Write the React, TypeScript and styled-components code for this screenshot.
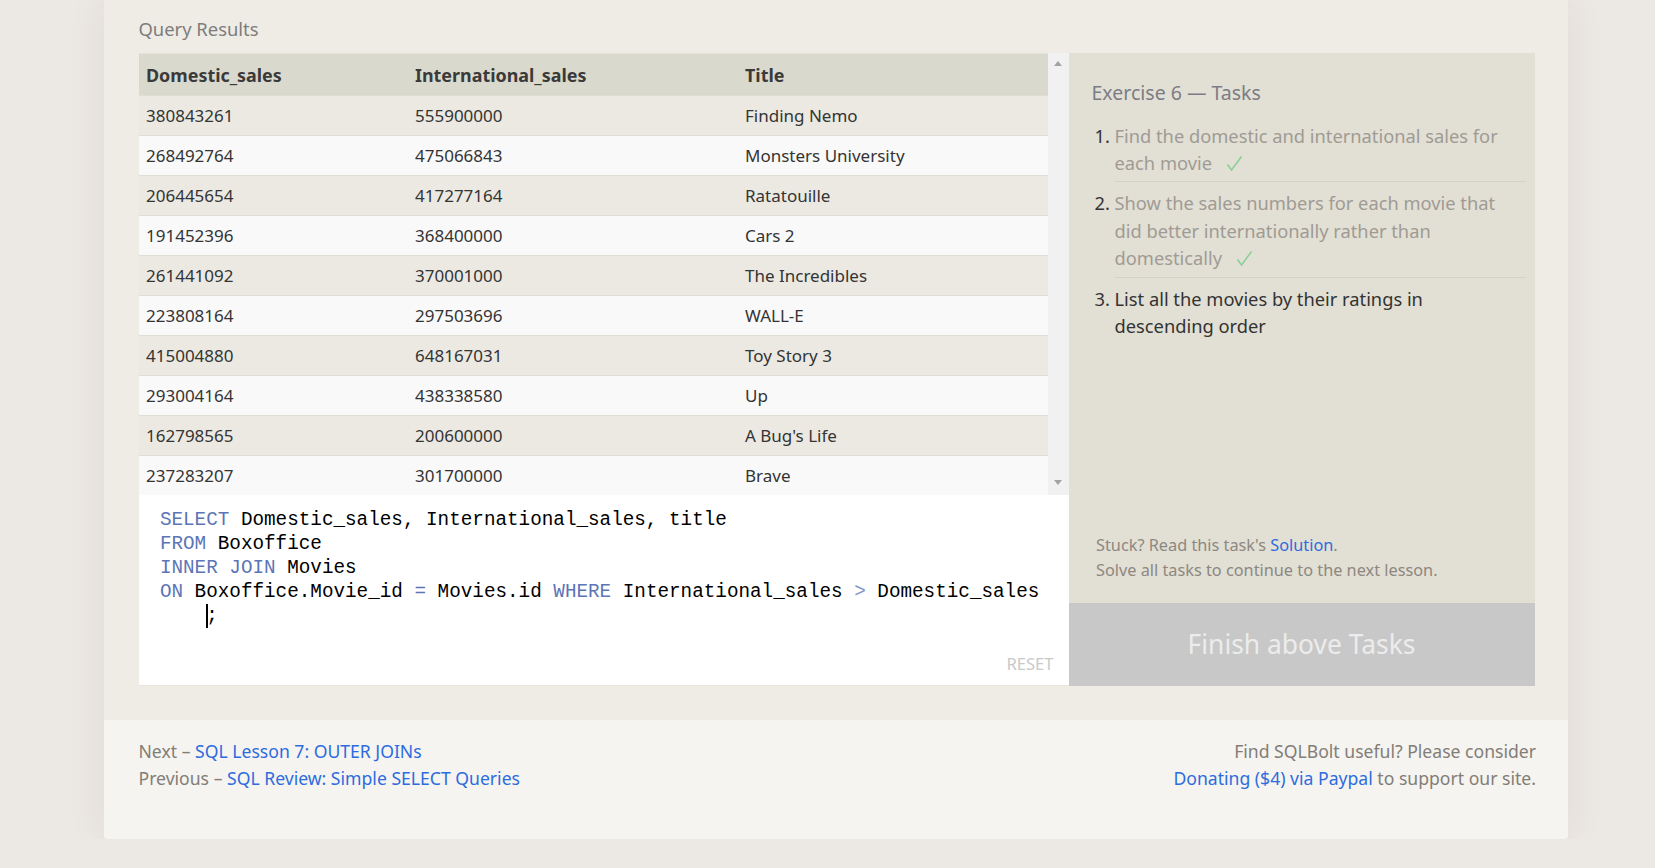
import React from 'react';
import styled, { createGlobalStyle } from 'styled-components';

const GlobalStyle = createGlobalStyle`
    html, body {
        margin: 0;
        padding: 0;
        background: #ece8e4;
        font-family: "Noto Sans", "Open Sans", sans-serif;
    }
`;

interface Row {
    domestic: string
    international: string
    title: string
}

const rows: Row[] = [
    { domestic: '380843261', international: '555900000', title: 'Finding Nemo' },
    { domestic: '268492764', international: '475066843', title: 'Monsters University' },
    { domestic: '206445654', international: '417277164', title: 'Ratatouille' },
    { domestic: '191452396', international: '368400000', title: 'Cars 2' },
    { domestic: '261441092', international: '370001000', title: 'The Incredibles' },
    { domestic: '223808164', international: '297503696', title: 'WALL-E' },
    { domestic: '415004880', international: '648167031', title: 'Toy Story 3' },
    { domestic: '293004164', international: '438338580', title: 'Up' },
    { domestic: '162798565', international: '200600000', title: "A Bug's Life" },
    { domestic: '237283207', international: '301700000', title: 'Brave' },
];

interface Task {
    text: string
    done: boolean
}

const tasks: Task[] = [
    { text: 'Find the domestic and international sales for each movie', done: true },
    { text: 'Show the sales numbers for each movie that did better internationally rather than domestically', done: true },
    { text: 'List all the movies by their ratings in descending order', done: false },
];

const Card = styled.div`
    width: 1464px;
    margin-left: 104px;
    background: #efece5;
    border-radius: 0 0 4px 4px;
    box-shadow: 0 0 40px rgba(60, 40, 20, 0.07);
`;

const Lesson = styled.section`
    padding: 14.5px 33px 34px 34.5px;
`;

const SectionTitle = styled.div`
    font-size: 18.4px;
    line-height: 27px;
    color: #7d7d7d;
    margin-bottom: 11.5px;
`;

const Exercise = styled.div`
    display: flex;
    height: 633px;
`;

const LeftColumn = styled.div`
    width: 930px;
    display: flex;
    flex-direction: column;
`;

const ResultsArea = styled.div`
    display: flex;
    height: 442px;
    background: #e8e6de;
`;

const Table = styled.div`
    flex: 1;
    display: flex;
    flex-direction: column;
`;

const TableRow = styled.div<{ $header?: boolean; $odd?: boolean }>`
    display: grid;
    grid-template-columns: 269px 330px 1fr;
    align-items: center;
    box-sizing: border-box;
    height: ${p => (p.$header ? '42px' : '40px')};
    background: ${p => (p.$header ? '#dad9cd' : p.$odd ? '#ebe9e1' : '#f9f9f9')};
    border-top: ${p => (p.$header ? '1px solid #e4e2da' : '1px solid #dfddd5')};
    color: ${p => (p.$header ? '#3a3a3a' : '#343434')};
    font-size: ${p => (p.$header ? '17.9px' : '17px')};
    font-weight: ${p => (p.$header ? 700 : 400)};
`;

const Cell = styled.div`
    padding-left: 7.5px;
    white-space: nowrap;
`;

const ScrollTrack = styled.div`
    width: 21px;
    background: #f1f1f1;
    display: flex;
    flex-direction: column;
    justify-content: space-between;
    align-items: center;
    padding: 8px 0 10px;
    box-sizing: border-box;
`;

const Arrow = styled.div<{ $down?: boolean }>`
    width: 0;
    height: 0;
    border-left: 4.5px solid transparent;
    border-right: 4.5px solid transparent;
    ${p => (p.$down ? 'border-top: 5px solid #a3a3a3;' : 'border-bottom: 5px solid #a3a3a3;')}
`;

const Editor = styled.div`
    flex: 1;
    background: #ffffff;
    display: flex;
    flex-direction: column;
    padding: 13px 15px 10px 21.4px;
    border-bottom: 1px solid #e6e4dc;
`;

const Code = styled.div`
    font-family: "Liberation Mono", "DejaVu Sans Mono", monospace;
    font-size: 19.3px;
    line-height: 24px;
    color: #000;
    white-space: pre;
`;

const Keyword = styled.span<{ $light?: boolean }>`
    color: ${p => (p.$light ? '#7f97cc' : '#5b75b6')};
`;

const Caret = styled.span`
    display: inline-block;
    width: 0;
    height: 24px;
    border-left: 2px solid #000;
    vertical-align: top;
    margin-right: -2px;
`;

const Reset = styled.div`
    margin-top: auto;
    align-self: flex-end;
    font-size: 16.6px;
    color: #c9c9c9;
`;

const TaskPanel = styled.aside`
    width: 466px;
    background: #e2dfd4;
    display: flex;
    flex-direction: column;
`;

const TaskBody = styled.div`
    flex: 1;
    display: flex;
    flex-direction: column;
    padding: 25.5px 9px 0 23px;
`;

const TaskHeading = styled.div`
    font-size: 19.5px;
    line-height: 27px;
    color: #7b7d86;
`;

const TaskList = styled.ol`
    list-style: none;
    margin: 9px 0 0 3px;
    padding: 0;
`;

const TaskItem = styled.li<{ $done?: boolean }>`
    display: grid;
    grid-template-columns: 20px 1fr;
    font-size: 18.3px;
    line-height: 27.4px;
    color: ${p => (p.$done ? '#9f9b94' : '#333333')};
`;

const TaskNumber = styled.span`
    color: #333333;
    padding-top: 7px;
`;

const TaskText = styled.span<{ $last?: boolean }>`
    padding: 7px 0 5px;
    border-bottom: ${p => (p.$last ? 'none' : '1px solid #d5d2c7')};
`;

const Check = styled.svg`
    width: 17px;
    height: 17px;
    margin-left: 14px;
    vertical-align: -2px;
`;

const Hint = styled.p`
    margin: auto 0 19.5px 4.5px;
    font-size: 16.3px;
    line-height: 25.3px;
    color: #8d8882;
`;

const Link = styled.a`
    color: #2d6cde;
    text-decoration: none;
`;

const FinishButton = styled.div`
    height: 83px;
    background: #c8c8c8;
    color: #ececec;
    font-size: 26.4px;
    display: flex;
    align-items: center;
    justify-content: center;
    padding-bottom: 2px;
    box-sizing: border-box;
`;

const Footer = styled.footer`
    display: flex;
    justify-content: space-between;
    height: 119px;
    box-sizing: border-box;
    padding: 17.75px 32px 0 34.5px;
    background: #f5f4f0;
    border-radius: 0 0 4px 4px;
    font-size: 17.6px;
    line-height: 27.5px;
    color: #827d77;
`;

const FooterBlock = styled.div<{ $right?: boolean }>`
    text-align: ${p => (p.$right ? 'right' : 'left')};
`;

const CheckMark = () => (
    <Check viewBox="0 0 17 17">
        <path d="M1.5 9.5 L5.5 15 L15.5 1.5" fill="none" stroke="#86cf92" strokeWidth="1.4" />
    </Check>
);

const App: React.FC = () => {
    return (
        <>
            <GlobalStyle />
            <Card>
                <Lesson>
                    <SectionTitle>Query Results</SectionTitle>
                    <Exercise>
                        <LeftColumn>
                            <ResultsArea>
                                <Table>
                                    <TableRow $header>
                                        <Cell>Domestic_sales</Cell>
                                        <Cell>International_sales</Cell>
                                        <Cell>Title</Cell>
                                    </TableRow>
                                    {rows.map((row, i) => (
                                        <TableRow key={row.title} $odd={i % 2 === 0}>
                                            <Cell>{row.domestic}</Cell>
                                            <Cell>{row.international}</Cell>
                                            <Cell>{row.title}</Cell>
                                        </TableRow>
                                    ))}
                                </Table>
                                <ScrollTrack>
                                    <Arrow />
                                    <Arrow $down />
                                </ScrollTrack>
                            </ResultsArea>
                            <Editor>
                                <Code>
                                    <div><Keyword>SELECT</Keyword> Domestic_sales, International_sales, title</div>
                                    <div><Keyword>FROM</Keyword> Boxoffice</div>
                                    <div><Keyword>INNER JOIN</Keyword> Movies</div>
                                    <div><Keyword>ON</Keyword> Boxoffice.Movie_id <Keyword>=</Keyword> Movies.id <Keyword>WHERE</Keyword> International_sales <Keyword $light>&gt;</Keyword> Domestic_sales</div>
                                    <div>{'    '}<Caret />;</div>
                                </Code>
                                <Reset>RESET</Reset>
                            </Editor>
                        </LeftColumn>
                        <TaskPanel>
                            <TaskBody>
                                <TaskHeading>Exercise 6 — Tasks</TaskHeading>
                                <TaskList>
                                    {tasks.map((task, i) => (
                                        <TaskItem key={i} $done={task.done}>
                                            <TaskNumber>{i + 1}.</TaskNumber>
                                            <TaskText $last={i === tasks.length - 1}>
                                                {task.text}
                                                {task.done && <CheckMark />}
                                            </TaskText>
                                        </TaskItem>
                                    ))}
                                </TaskList>
                                <Hint>
                                    Stuck? Read this task's <Link href="#">Solution</Link>.<br />
                                    Solve all tasks to continue to the next lesson.
                                </Hint>
                            </TaskBody>
                            <FinishButton>Finish above Tasks</FinishButton>
                        </TaskPanel>
                    </Exercise>
                </Lesson>
                <Footer>
                    <FooterBlock>
                        Next – <Link href="#">SQL Lesson 7: OUTER JOINs</Link><br />
                        Previous – <Link href="#">SQL Review: Simple SELECT Queries</Link>
                    </FooterBlock>
                    <FooterBlock $right>
                        Find SQLBolt useful? Please consider<br />
                        <Link href="#">Donating ($4) via Paypal</Link> to support our site.
                    </FooterBlock>
                </Footer>
            </Card>
        </>
    );
};

export default App;
